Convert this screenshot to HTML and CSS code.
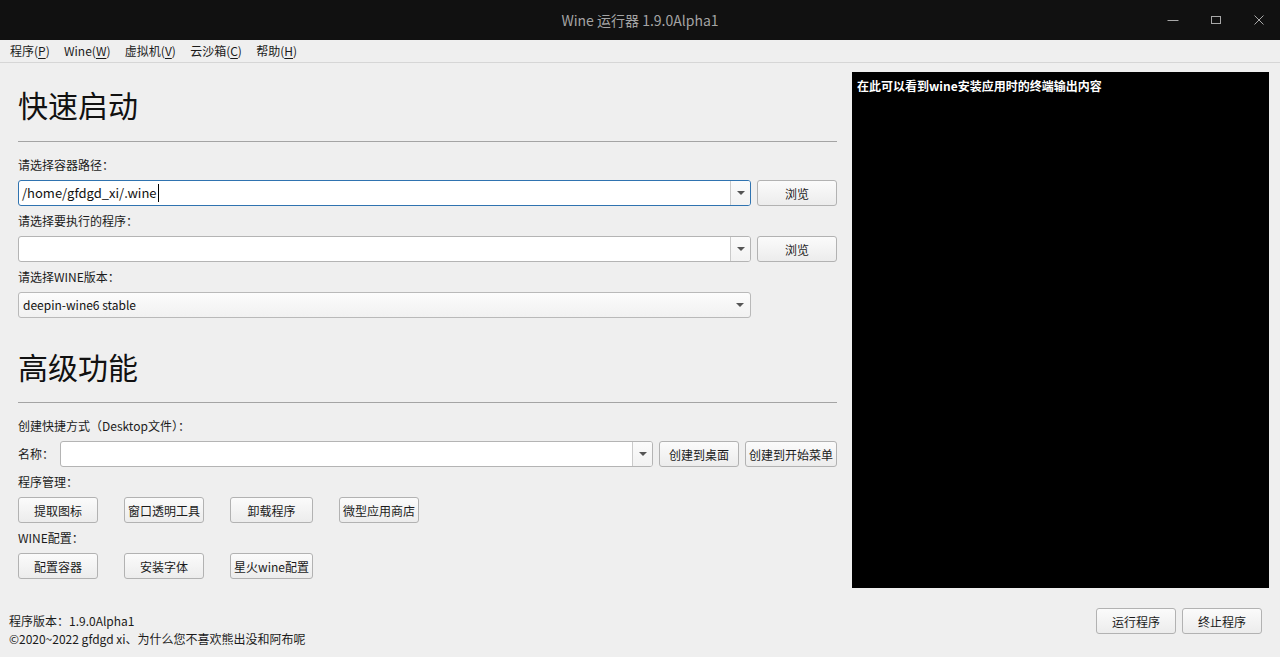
FILE: index.html
```html
<!DOCTYPE html>
<html lang="zh-CN">
<head>
    <meta charset="UTF-8">
    <title>Wine 运行器 1.9.0Alpha1</title>
    <link rel="stylesheet" href="styles.css">
</head>
<body>
    <header class="titlebar">
        <div></div>
        <div class="title">Wine 运行器 1.9.0Alpha1</div>
        <div class="window-controls">
            <span class="wc">
                <svg width="12" height="12" viewBox="0 0 12 12"><path d="M0.5 6.5h11" stroke="#a8a8a8" stroke-width="1"/></svg>
            </span>
            <span class="wc">
                <svg width="12" height="12" viewBox="0 0 12 12"><rect x="1.5" y="2.5" width="9" height="7" fill="none" stroke="#a8a8a8" stroke-width="1"/></svg>
            </span>
            <span class="wc">
                <svg width="12" height="12" viewBox="0 0 12 12"><path d="M1.5 1.5l9 9M10.5 1.5l-9 9" stroke="#a8a8a8" stroke-width="1"/></svg>
            </span>
        </div>
    </header>

    <nav class="menubar">
        <span>程序(<u>P</u>)</span>
        <span>Wine(<u>W</u>)</span>
        <span>虚拟机(<u>V</u>)</span>
        <span>云沙箱(<u>C</u>)</span>
        <span>帮助(<u>H</u>)</span>
    </nav>

    <div class="main">
        <div class="left">
            <h1 class="heading">快速启动</h1>
            <div class="line"></div>

            <div class="label first">请选择容器路径：</div>
            <div class="row">
                <div class="combo focus">
                    <div class="combo-text">/home/gfdgd_xi/.wine<span class="caret"></span></div>
                    <div class="combo-arrow"><span class="tri"></span></div>
                </div>
                <button class="btn">浏览</button>
            </div>

            <div class="label">请选择要执行的程序：</div>
            <div class="row">
                <div class="combo">
                    <div class="combo-text"></div>
                    <div class="combo-arrow"><span class="tri"></span></div>
                </div>
                <button class="btn">浏览</button>
            </div>

            <div class="label">请选择WINE版本：</div>
            <div class="row">
                <div class="combo select">
                    <div class="combo-text">deepin-wine6 stable</div>
                    <div class="combo-arrow plain"><span class="tri"></span></div>
                </div>
                <div class="btn-space"></div>
            </div>

            <h1 class="heading second">高级功能</h1>
            <div class="line line2"></div>

            <div class="label third">创建快捷方式（Desktop文件）：</div>
            <div class="row">
                <div class="name-label">名称：</div>
                <div class="combo">
                    <div class="combo-text"></div>
                    <div class="combo-arrow"><span class="tri"></span></div>
                </div>
                <button class="btn">创建到桌面</button>
                <button class="btn wide">创建到开始菜单</button>
            </div>

            <div class="label">程序管理：</div>
            <div class="btn-grid">
                <button class="btn">提取图标</button>
                <button class="btn">窗口透明工具</button>
                <button class="btn">卸载程序</button>
                <button class="btn">微型应用商店</button>
            </div>

            <div class="label">WINE配置：</div>
            <div class="btn-grid">
                <button class="btn">配置容器</button>
                <button class="btn">安装字体</button>
                <button class="btn">星火wine配置</button>
            </div>
        </div>

        <div class="terminal">在此可以看到wine安装应用时的终端输出内容</div>
    </div>

    <footer class="footer">
        <div class="about">
            <div>程序版本：1.9.0Alpha1</div>
            <div>©2020~2022 gfdgd xi、为什么您不喜欢熊出没和阿布呢</div>
        </div>
        <div class="actions">
            <button class="btn">运行程序</button>
            <button class="btn">终止程序</button>
        </div>
    </footer>
</body>
</html>
```

FILE: styles.css
```css
* {
    margin: 0;
    padding: 0;
    box-sizing: border-box;
}

body {
    width: 1280px;
    height: 657px;
    overflow: hidden;
    background-color: #efefef;
    color: #1b1b1b;
    font-family: "Noto Sans CJK SC", "Noto Sans", sans-serif;
    font-size: 12px;
}

/* barra de titulo */
.titlebar {
    height: 40px;
    background-color: #111111;
    display: grid;
    grid-template-columns: 1fr auto 1fr;
    align-items: center;
}

.title {
    color: #a4a4a4;
    font-size: 14px;
}

.window-controls {
    justify-self: end;
    display: flex;
}

.wc {
    width: 43px;
    height: 40px;
    display: flex;
    align-items: center;
    justify-content: center;
}

.wc svg {
    display: block;
}

/* menu */
.menubar {
    height: 23px;
    border-bottom: 1px solid #d6d6d6;
    display: flex;
    align-items: center;
    gap: 14.3px;
    padding-left: 10px;
    padding-bottom: 1px;
}

.menubar u {
    text-underline-offset: 2px;
}

.main {
    display: flex;
    gap: 15px;
    padding: 0 11px 0 18px;
}

.left {
    width: 819px;
    display: flex;
    flex-direction: column;
}

.heading {
    height: 40px;
    line-height: 40px;
    font-size: 30px;
    font-weight: normal;
    color: #111;
    margin-top: 21px;
}

.heading.second {
    margin-top: 28px;
}

.line {
    height: 1px;
    background-color: #a4a4a4;
    margin-top: 17px;
}

.line.line2 {
    margin-top: 16px;
}

.label {
    height: 24px;
    line-height: 24px;
    margin-top: 3px;
}

.label.first {
    margin-top: 11px;
}

.label.third {
    margin-top: 11px;
}

.row {
    height: 26px;
    margin-top: 3px;
    display: flex;
    gap: 6px;
}

.name-label {
    width: 36px;
    line-height: 26px;
}

.combo {
    flex: 1;
    display: flex;
    background-color: #ffffff;
    border: 1px solid #b4b4b4;
    border-radius: 3px;
}

.combo.focus {
    border-color: #2f73b0;
}

.combo.select {
    background: linear-gradient(#fcfcfc, #f1f1f1);
    border-color: #b9b9b9;
}

.combo-text {
    flex: 1;
    line-height: 24px;
    padding-left: 3px;
    font-size: 13px;
    color: #111;
}

.combo.select .combo-text {
    padding-left: 4px;
    font-size: 12px;
}

.caret {
    display: inline-block;
    width: 1px;
    height: 18px;
    background-color: #000;
    vertical-align: -4px;
    margin-left: 1px;
}

.combo-arrow {
    width: 20px;
    border-left: 1px solid #cacaca;
    background: linear-gradient(#fbfbfb, #f2f2f2);
    border-radius: 0 2px 2px 0;
    display: flex;
    align-items: center;
    justify-content: center;
}

.combo-arrow.plain {
    border-left: none;
    background: none;
}

.tri {
    width: 0;
    height: 0;
    border-left: 4px solid transparent;
    border-right: 4px solid transparent;
    border-top: 4px solid #555555;
}

.btn {
    width: 80px;
    height: 26px;
    background: linear-gradient(#fbfbfb, #ececec);
    border: 1px solid #b2b2b2;
    border-radius: 3px;
    font-family: "Noto Sans CJK SC", "Noto Sans", sans-serif;
    font-size: 12px;
    color: #1b1b1b;
    white-space: nowrap;
}

.btn.wide {
    width: 92px;
}

.btn-space {
    width: 80px;
    flex: none;
}

.row .btn {
    flex: none;
}

.btn-grid {
    margin-top: 3px;
    display: grid;
    grid-template-columns: 80px 80px 83px 80px;
    column-gap: 26px;
}

.btn-grid .btn {
    width: 100%;
}

.terminal {
    width: 417px;
    height: 516px;
    margin-top: 9px;
    background-color: #000000;
    color: #ffffff;
    font-weight: bold;
    padding: 5px 5px;
    line-height: 18px;
}

/* rodape */
.footer {
    margin-top: 20px;
    display: flex;
    justify-content: space-between;
    padding: 0 18px 0 9px;
}

.about {
    margin-top: 4px;
    line-height: 18px;
}

.actions {
    display: flex;
    gap: 6px;
}
```
